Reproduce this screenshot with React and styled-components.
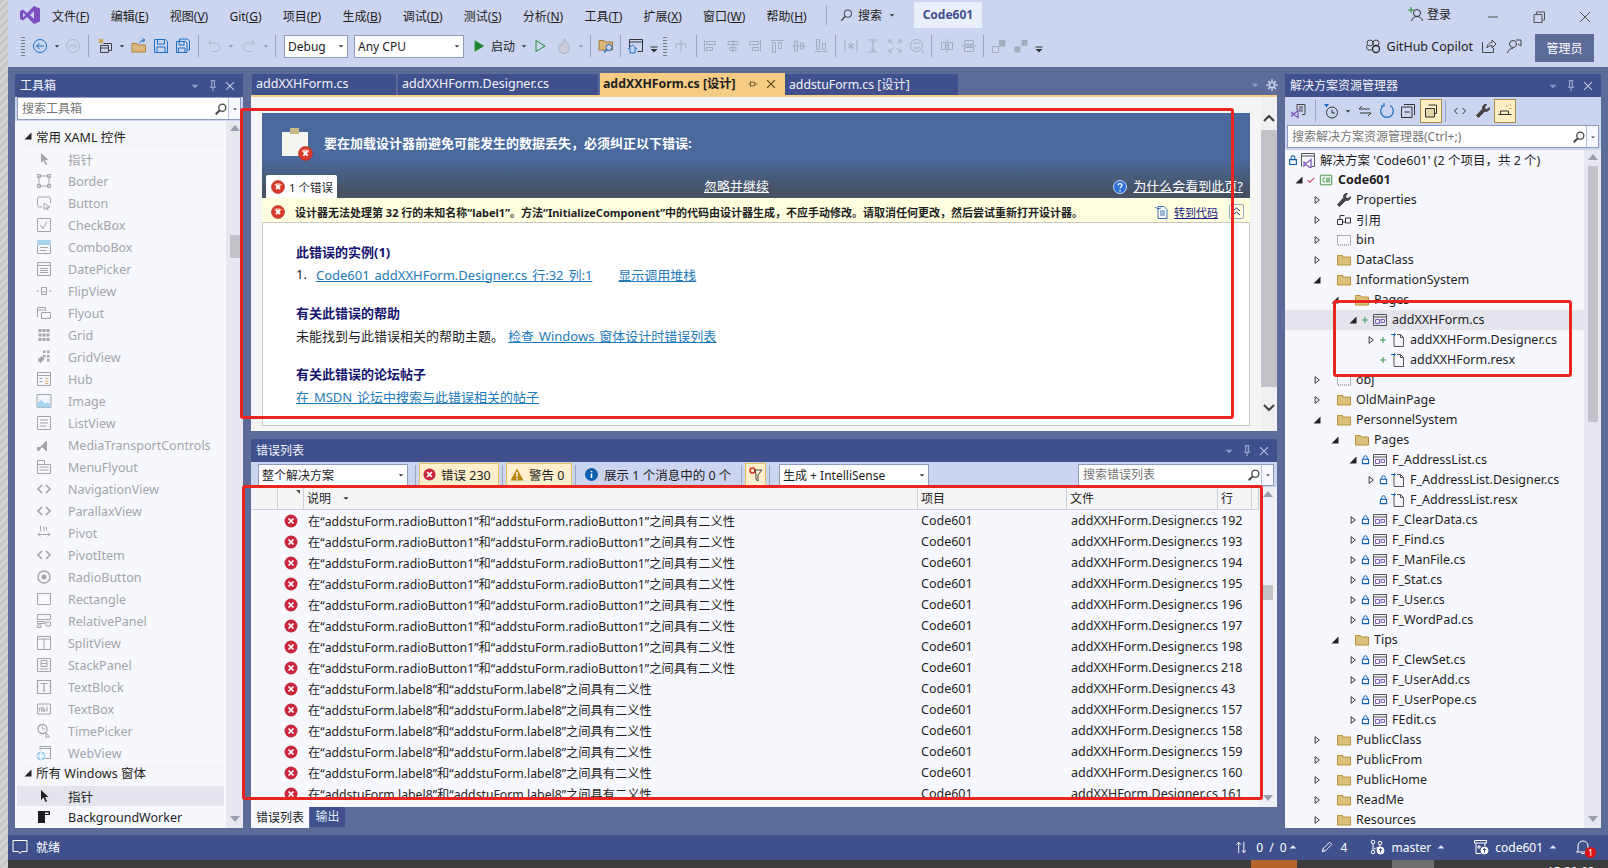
import React from "react";
import styled, { createGlobalStyle } from "styled-components";

const FONT = '"Noto Sans", "Noto Sans CJK SC", sans-serif';

const Global = createGlobalStyle`
  html, body { margin: 0; padding: 0; background: #ccd5f0; overflow: hidden; }
  body { font-family: ${FONT}; font-size: 12px; color: #1e1e1e; }
`;

const Glyph = styled.svg`
  display: block;
  flex: none;
  fill: none;
  stroke-width: 1;
`;

const BLUE = "#1b6ec2";
const GOLD = "#b8923f";
const PURPLE = "#7d5bb8";
const DIM = "#a3abbc";

const paths = {
  back: <g stroke={BLUE}><circle cx="8" cy="8" r="6.5" /><path d="M12 8H4.5M7.5 5 4.500 8l3 3" /></g>,
  fwd: <g stroke="#aeb6c9"><circle cx="8" cy="8" r="6.5" /><path d="M4 8h7.5M8.5 5l3 3-3 3" /></g>,
  caret: <path d="M5 7h6l-3 3z" fill="#333" stroke="none" />,
  caretGrey: <path d="M5 7h6l-3 3z" fill="#8d95a8" stroke="none" />,
  caretPale: <path d="M4 6.5h8l-4 4z" fill="#8b9ac6" stroke="none" />,
  caretWhite: <path d="M3.5 10 8 5.5l4.5 4.500z" fill="#e8ecf8" stroke="none" />,
  new: (
    <>
      <path d="M4 .5v5M1.5 3h5M2 1l4 4M6 1 2 5" stroke="#c89a2a" />
      <path d="M6.5 5.5h8v7h-3" stroke="#444" />
      <path d="M3.5 7.5h8v7h-8zM3.5 10h8" stroke="#444" />
    </>
  ),
  open: (
    <>
      <path d="M1 14V5.5h5l1 1.5h7.5v7z" fill="#dcb67a" stroke="#b0823a" />
      <path d="M8.5 5c1-2 3-3 5-3M11.5.5l2.5 1.5-2.5 2" stroke={BLUE} />
    </>
  ),
  save: <path d="M1.5 1.5h11l2 2v11h-13zM4.500 1.500V6h7V1.500M4 14.500V9h8v5.500" stroke={BLUE} />,
  saveall: (
    <>
      <path d="M4.5 3V1h8l2 2v9h-2" stroke={BLUE} />
      <path d="M1.5 3.5h9L12 5v9.500H1.500zM4 3.500V7h5V3.500M3.500 14.500V10h6.500v4.500" stroke={BLUE} />
    </>
  ),
  undo: <path d="M5 2 2.500 5l3 2.500M3 5h6.500a4.200 4.200 0 0 1 0 8.500H6" stroke="#aeb6c9" />,
  redo: <path d="M11 2l2.500 3-3 2.500M13 5H6.500a4.200 4.200 0 0 0 0 8.500H10" stroke="#aeb6c9" />,
  play: <path d="M3 1.500v13L14 8z" fill="#1e8a2e" stroke="none" />,
  play2: <path d="M4 2.500v11L13 8z" stroke="#1e8a2e" />,
  flame: <path d="M9 1c0 3 4.500 5 4.500 9a5.500 5.500 0 0 1-11 0c0-2 1-3.500 2-4.500 0 1.500.5 2.500 1.500 2.500C6.500 6 7 3 9 1z" fill="#c9ccd6" stroke="#aeb2c0" />,
  folderFind: (
    <>
      <path d="M1 12V2.500h5L7 4h7.500v8z" fill="#dcb67a" stroke="#9a7a38" />
      <circle cx="11" cy="9.500" r="3" fill="#ccd5f0" stroke={BLUE} />
      <path d="M9 11.500l-3 3" stroke={BLUE} strokeWidth="1.500" />
    </>
  ),
  winHome: (
    <>
      <path d="M1.500 9V1.500h13v12h-5M1.500 4h13" stroke="#333" />
      <path d="M0 11 4.500 7 9 11M2 10v5h5v-5" stroke={BLUE} />
    </>
  ),
  more: (
    <>
      <path d="M4.500 9h7" stroke="#333" />
      <path d="M4.500 11h7L8 14.500z" fill="#333" stroke="none" />
    </>
  ),
  tabOrder: <path d="M8 2v12M3 6h10M3 6v4M13 6v4" stroke={DIM} />,
  alignL: <path d="M2.500 2v12M4.500 3.500h9v3h-9zM4.500 9.500h6v3h-6z" stroke={DIM} />,
  alignC: <path d="M8 1.500v13M3 3.500h10v3H3zM5 9.500h6v3H5z" stroke={DIM} />,
  alignR: <path d="M13.500 2v12M2.500 3.500h9v3h-9zM5.500 9.500h6v3h-6z" stroke={DIM} />,
  alignT: <path d="M1.500 2.500h13M3.500 4.500v10h3v-10zM9.500 4.500v6h3v-6z" stroke={DIM} />,
  alignM: <path d="M1.500 8h13M3.500 3v10h3V3zM9.500 5v6h3V5z" stroke={DIM} />,
  alignB: <path d="M1.500 13.500h13M3.500 1.500v10h3v-10zM9.500 5.500v6h3v-6z" stroke={DIM} />,
  spaceEq: <path d="M2 2v12M14 2v12M8 4.500v7M5 6l6 4M11 6l-6 4" stroke={DIM} />,
  vSize: <path d="M3 2h10M3 14h10M8 3v10M6 5l2-2 2 2M6 11l2 2 2-2" stroke={DIM} />,
  fit: <path d="M2 5V2h3M11 2h3v3M14 11v3h-3M5 14H2v-3M3 3l3 3M13 3l-3 3M13 13l-3-3M3 13l3-3" stroke={DIM} />,
  zoomFit: <g stroke={DIM}><circle cx="7.500" cy="7.500" r="6" /><path d="M5 6V5h5v1M5 9v1h5V9M12 12l3 3" /></g>,
  distH: <path d="M8 1v14M2.500 4.500h4v7h-4zM9.500 4.500h4v7h-4z" stroke={DIM} />,
  distV: <path d="M1 8h14M3.500 2.500h9v4h-9zM3.500 9.500h9v4h-9z" stroke={DIM} />,
  front: (
    <>
      <path d="M1.500 8.500h6v6h-6z" stroke={DIM} />
      <path d="M8 2h6.500v6.500H8z" fill={DIM} stroke="none" />
    </>
  ),
  backward: (
    <>
      <path d="M1.500 8.500h6v6h-6z" fill={DIM} stroke="none" />
      <path d="M8.500 2h6v6h-6z" fill={DIM} stroke="none" />
    </>
  ),
  search: <><circle cx="9.500" cy="6.500" r="4" stroke="#444" strokeWidth="1.500" /><path d="M6.500 9.500 2 14" stroke="#444" strokeWidth="2.200" /></>,
  searchThin: <><circle cx="9.500" cy="6" r="4" stroke="#333" /><path d="M6.500 9 2.500 13.500" stroke="#333" strokeWidth="1.400" /></>,
  signin: (
    <>
      <circle cx="9" cy="7" r="3.500" stroke="#333" />
      <path d="M3.500 15c.5-3 3-4.500 5.500-4.500s5 1.500 5.500 4.500" stroke="#333" />
      <path d="M3 1v6M0 4h6" stroke="#1e8a2e" />
    </>
  ),
  min: <path d="M3 8h10" stroke="#555" />,
  restore: <path d="M3 5.500h8v8H3zM5.500 5.500V3h8v8H11" stroke="#555" />,
  close: <path d="M3 3l10 10M13 3 3 13" stroke="#555" />,
  copilot: (
    <>
      <circle cx="5" cy="5" r="3" stroke="#444" />
      <circle cx="11" cy="5" r="3" stroke="#444" />
      <path d="M2 7c-1 2 0 5 2 5h3" stroke="#444" />
      <circle cx="11" cy="11" r="3.500" fill="#ccd5f0" stroke="#222" strokeWidth="1.300" />
    </>
  ),
  share: <path d="M1.500 4v10.500h11V10M6 10c0-4 3-5.500 5-5.500V2l4 4-4 4V7.500c-2 0-4 .5-5 2.500z" stroke="#444" />,
  feedback: (
    <>
      <circle cx="7" cy="6" r="3.500" stroke="#444" />
      <path d="M1.500 15c.5-3 2.500-4.500 5.500-4.500M10 2h5v6l-3-2" stroke="#444" />
    </>
  ),
  pin: <path d="M5.500 2h5M6.500 2v6L5 9.500h6L9.500 8V2M8 9.500V14" stroke="#b8c3e2" />,
  pinDark: <path d="M3 8h2M5 4.500v7M5 6h5v4H5M10 8h3" stroke="#6b5320" />,
  x: <path d="M3.500 3.500l9 9M12.500 3.500l-9 9" stroke="#b8c3e2" strokeWidth="1.300" />,
  xDark: <path d="M3.500 3.500l9 9M12.500 3.500l-9 9" stroke="#5a4516" strokeWidth="1.300" />,
  gear: <g stroke="#c9d2ec" strokeWidth="1.800"><circle cx="8" cy="8" r="3" /><path d="M8 1.500V4M8 12v2.500M1.500 8H4M12 8h2.500M3.500 3.500l1.800 1.800M10.700 10.700l1.800 1.800M12.500 3.500l-1.800 1.800M5.300 10.700l-1.800 1.800" /></g>,
  // toolbox
  pointer: <path d="M5 2v10l2.500-2.500L9.500 14l1.500-.7-2-4.300h3.500z" fill="currentColor" stroke="none" />,
  border: <path d="M3 3h10v10H3zM1.500 1.500h3v3h-3zM11.500 1.500h3v3h-3zM1.500 11.500h3v3h-3zM11.500 11.500h3v3h-3z" stroke="currentColor" />,
  button: <path d="M6 12H3c-1 0-1.500-.5-1.500-1.500v-7C1.500 2.500 2 2 3 2h10c1 0 1.500.5 1.500 1.500V8M8 8v6.500l1.800-1.800 1.500 2.300 1-.6-1.400-2.200H14z" stroke="currentColor" />,
  check: <path d="M1.500 1.500h13v13h-13zM4.500 8L7 11.500l4-7" stroke="currentColor" />,
  combo: (
    <>
      <path d="M1.500 1.500h13v13h-13z" stroke="currentColor" />
      <path d="M1.500 1.500h13v4h-13z" fill="#a8d4ee" stroke="#a8d4ee" />
      <path d="M4 8.500h8M4 11.500h6" stroke="currentColor" />
    </>
  ),
  date: <path d="M1.500 1.500h13v13h-13zM1.500 4.500h13M4 7.500h8M4 9.500h8M4 11.500h8" stroke="currentColor" />,
  flip: <path d="M5.500 4.500h5v7h-5zM3 8H.5M13 8h2.500M6.500 10L8 8l2 2" stroke="currentColor" />,
  flyout: <path d="M1.500 12V2.500h8V6M1.500 5h8M5.500 7.500h9v6h-9z" stroke="currentColor" />,
  grid: <path d="M2.500 3.500h11M2.500 8h11M2.500 12.500h11" stroke="currentColor" strokeWidth="3" strokeDasharray="3 1" />,
  gridView: <path d="M7 1.500h2.500V4H7zM11 1.500h2.500V4H11zM7 6h2.500v2.500H7zM11 6h2.500v2.500H11zM11 10h2.500v2.500H11zM1.500 11l4-4 3 3-4 4z" fill="currentColor" stroke="none" />,
  hub: (
    <>
      <path d="M1.500 1.500h13v13h-13zM1.500 4.500h13M3.500 7.500h3M3.500 10.500h3" stroke="currentColor" />
      <path d="M9 7.500h3.500M9 10h3.500M9 12.500h3.500" stroke="#dcb67a" />
    </>
  ),
  image: (
    <>
      <path d="M1 1.500h14v13H1z" fill="#f0f6fc" stroke="currentColor" />
      <path d="M1 14.500V10l4-3 4 3.500L11.500 9l3.500 2.500v3z" fill="#a8d4ee" stroke="none" />
    </>
  ),
  listView: <path d="M1.500 1.500h13v13h-13zM4 5h8M4 8h8M4 11h6" stroke="currentColor" />,
  media: <path d="M1 10h3l6-6h1v10h-1l-4-4-3 4H1z" fill="currentColor" stroke="none" />,
  menu: <path d="M1.500 1.500h7v4h6v9h-13zM1.500 5.500h7M3.500 8h9M3.500 11h9" stroke="currentColor" />,
  code: <path d="M6 4 2 8l4 4M10 4l4 4-4 4" stroke="currentColor" strokeWidth="1.600" />,
  pivot: <path d="M2 9.500h12M2 9.500l2-2M2 9.500l2 2M14 9.500l-2-2M14 9.500l-2 2M4.500 1v5M8 1v5M10.500 2v3.500" stroke="currentColor" />,
  radio: <><circle cx="8" cy="8" r="6" stroke="currentColor" strokeWidth="1.500" /><circle cx="8" cy="8" r="2.500" fill="currentColor" stroke="none" /></>,
  rect: <path d="M1.500 2.500h13v11h-13z" stroke="currentColor" />,
  relative: <path d="M1.500 1.500h13v5h-13zM1.500 8.500h7v2h-7zM1.500 12H5v2.500H1.500zM10 9h4.500v4H10z" stroke="currentColor" />,
  split: <path d="M1.500 1.500h13v13h-13zM1.500 4h13M8 4v10.500" stroke="currentColor" />,
  stack: <path d="M1.500 1.500h13v13h-13zM5 3.500h6v3H5zM5 6.500h6v3H5zM3.500 12h9" stroke="currentColor" />,
  textBlock: <path d="M1.500 1.500h13v13h-13zM4.500 4.500h7M8 4.500V12M6.500 12h3" stroke="currentColor" strokeWidth="1.200" />,
  textBox: <path d="M1.500 3h13v10h-13zM3.500 10.500V7l1-1 1 1v3.500M7 5.500v5h1.500l.5-1-.5-1.500H7M11 5.500v5" stroke="currentColor" />,
  time: <><circle cx="6.500" cy="6" r="4.500" stroke="currentColor" strokeWidth="1.300" /><path d="M6.500 3.500V6H9M10 9.500V15l1.300-1.200 2.200.2z" stroke="currentColor" /></>,
  web: (
    <>
      <path d="M4 1.500h10.500v12H9M4 1.500V5M4 3.500h10.500" stroke="currentColor" />
      <circle cx="5" cy="11" r="4" fill="#bfe0f4" stroke="#8dc6e8" />
      <path d="M1 11h8M5 7v8" stroke="#fff" />
    </>
  ),
  worker: <path d="M2 2h12v4H9v8H2zM9 3.500h3.500V5H9z" fill="currentColor" fillRule="evenodd" stroke="none" />,
  // explorer
  vsDoc: (
    <>
      <path d="M6 7V1.500h8v10h-3M8 4h4M8 6h4M8 8h4" stroke="#444" />
      <path d="M1 9.500L3 11l4-3.500v7l-4-3-2 1.500z" stroke={PURPLE} strokeWidth="1.300" />
    </>
  ),
  history: (
    <>
      <circle cx="9" cy="9.500" r="5.500" stroke="#333" />
      <path d="M9 6.500V10h3" stroke="#333" />
      <path d="M1 1h5L3.500 4.500z" fill={BLUE} stroke="none" />
    </>
  ),
  syncArrows: <path d="M2 6h11M5 3 2 6M14 10H3M11 13l3-3" stroke="#333" />,
  refresh: <path d="M5 2.500A6.300 6.300 0 1 0 11 2.500M5 0v3H2" stroke={BLUE} strokeWidth="1.200" />,
  collapse: <path d="M1.500 4H12v10.500H1.500zM4 1.500h10.500V12M4.500 9h5" stroke="#333" />,
  pages: (
    <>
      <path d="M5.500 2h8v8.500h-2" stroke="#333" />
      <path d="M2.500 5.500h9V14h-9z" stroke="#333" fill="#e6d6ac" />
    </>
  ),
  codeDark: <path d="M5.500 5 2.500 8l3 3M10.500 5l3 3-3 3" stroke="#333" />,
  wrench: <path d="M14.500 4.500L12 6.500 10 6l-.5-2 2-2.500c-2-.5-4 1-4 3 0 .5 0 1 .2 1.300L1.500 12.500l2 2 6.200-6.200c2.500.8 5.300-1.300 4.800-3.800z" fill="#444" stroke="#444" />,
  plugin: (
    <>
      <path d="M1.500 11.500h13M3.500 11.500V8h8v3.500" stroke="#333" />
      <path d="M12.500 5.500h2M12.500 2.500l1.500-1M9.500 4l.5-1.500" stroke={GOLD} />
    </>
  ),
  folder: <path d="M1.500 13V3.500h5l1 1.500h7v8z" fill="#dcc07a" stroke={GOLD} />,
  dotted: <path d="M1.500 3.500h13V13h-13z" stroke="#666" strokeDasharray="1 1" />,
  form: (
    <>
      <path d="M1.500 2.500h13v11h-13zM1.500 5h13" stroke="#555" />
      <path d="M3.500 7.500h4v4h-4zM9 7.500h3.500v3H9z" stroke={PURPLE} />
    </>
  ),
  page: (
    <>
      <path d="M4 3.500v11h9.500v-9l-3-3H7" stroke="#555" />
      <path d="M10.500 2.500v3h3" stroke="#555" />
      <path d="M1 2.500h4.500M4 1l1.500 1.500L4 4" stroke={BLUE} />
    </>
  ),
  solution: (
    <>
      <path d="M1.500 14.500v-13h13v13h-5M1.500 4h13" stroke="#555" />
      <path d="M4 10l2 1.500 5-4v9l-5-4-2 1.500z" fill="#fff" stroke={PURPLE} strokeWidth="1.300" />
    </>
  ),
  csproj: (
    <>
      <path d="M1.500 2.500h13v11h-13z" fill="#eaf5ea" stroke="#3f8f45" />
      <path d="M7 5.500H5.500l-1 1V9l1 1H7" stroke="#3f8f45" />
      <path d="M9 5v6M11.500 5v6M8 7h5M8 9.500h5" stroke="#3f8f45" strokeWidth=".8" />
    </>
  ),
  refs: <path d="M1.500 7.500h5v5h-5zM9.500 6h5v5h-5zM4 7.500v-4h4.500M6.500 10h3" stroke="#333" />,
  lock: <><path d="M3.500 7.500h9V14h-9z" stroke="#0f5fae" strokeWidth="1.500" /><path d="M5.500 7.500V5a2.500 2.500 0 0 1 5 0v2.500" stroke="#0f5fae" strokeWidth="1.400" /></>,
  plus: <path d="M8 4v8M4 8h8" stroke="#3f9a56" strokeWidth="1.400" />,
  tick: <path d="M3.500 8l3 3 6-6" stroke="#c8283c" strokeWidth="1.400" />,
  triOpen: <path d="M4 12h8V4z" fill="#222" stroke="none" />,
  triClosed: <path d="M5.500 3.500L11 8l-5.500 4.500z" stroke="#222" strokeWidth="1.200" />,
  // status
  bubble: <path d="M1 1.500h14v11H9.500L8 14.500l-1.500-2H1z" stroke="#fff" />,
  sort: <path d="M5 14V2.500M2.500 5L5 2.500 7.500 5M10.500 2v11.500M8.500 11l2 2.500 2-2.500" stroke="#fff" />,
  pencil: <path d="M2.500 13.500l1-3.500L11 2.500 13.500 5 6 12.500zM3.500 10L6 12.500" stroke="#fff" />,
  branch: (
    <g stroke="#fff">
      <circle cx="4" cy="3" r="1.800" />
      <circle cx="4" cy="13" r="1.800" />
      <circle cx="11" cy="4" r="1.800" />
      <path d="M4 5v6M11 6c0 3-4 2.500-6 4" />
      <circle cx="11.500" cy="11.500" r="3.500" fill="#fff" />
      <path d="M11.500 13.500v-4M10 11l1.500-1.500L13 11" stroke="#40508d" />
    </g>
  ),
  repo: (
    <g stroke="#fff">
      <path d="M1.500 1.500h12V4h-12zM3 4v10.500h5M12 4v3" />
      <path d="M5 7h2v2H5z" />
      <circle cx="11.500" cy="11.500" r="3.500" fill="#fff" />
      <path d="M11.500 13.500v-4M10 11l1.500-1.500L13 11" stroke="#40508d" />
    </g>
  ),
  bell: <path d="M3 11.500V7a5 5 0 0 1 10 0v4.500l1.500 1.500h-13zM6.500 14.500h3" stroke="#fff" />,
};

const Icon = ({ n, s = 16 }) => (
  <Glyph width={s} height={s} viewBox="0 0 16 16">
    {paths[n]}
  </Glyph>
);

const ErrorDot = ({ s = 14 }) => (
  <Glyph width={s} height={s} viewBox="0 0 14 14">
    <circle cx="7" cy="7" r="6.500" fill="#c8283c" />
    <path d="M4.500 4.500l5 5M9.500 4.500l-5 5" stroke="#fff" strokeWidth="1.700" />
  </Glyph>
);

const GlossDot = ({ s = 15 }) => (
  <Glyph width={s} height={s} viewBox="0 0 14 14">
    <circle cx="7" cy="7" r="6.500" fill="#d8392c" stroke="#a92a20" strokeWidth=".6" />
    <path d="M3 5c1-2.500 7-2.500 8 0-2 1-6 1-8 0z" fill="#f6a99a" />
    <path d="M5 5l4 4M9 5L5 9" stroke="#fff" strokeWidth="1.800" />
  </Glyph>
);

const Root = styled.div`
  position: relative;
  display: flex;
  width: 1608px;
  height: 868px;
  overflow: hidden;
`;

const Strip = styled.div`
  flex: none;
  width: 8px;
  background: repeating-linear-gradient(135deg, #c6c6c6 0 3px, #d4d4d4 3px 6px);
`;

const Win = styled.div`
  flex: 1;
  min-width: 0;
  display: flex;
  flex-direction: column;
`;

const MenuBar = styled.div`
  flex: none;
  height: 33px;
  display: flex;
  align-items: center;
  background: #ccd5f0;
  padding-left: 12px;
`;

const Logo = styled.svg`
  flex: none;
  margin-right: 12px;
  margin-top: -3px;
`;

const MenuItem = styled.span`
  flex: none;
  margin-right: 21.2px;
  font-size: 12px;
  line-height: 18px;
  color: #1e1e1e;
  white-space: nowrap;
`;

const Key = styled.span`
  text-decoration: underline;
`;

const MenuSep = styled.i`
  flex: none;
  width: 1px;
  height: 20px;
  background: #9aa5c4;
  margin: -4px 12px 0 -2px;
`;

const SearchHint = styled.div`
  display: flex;
  align-items: center;
  gap: 4px;
  margin-top: -3px;
  margin-right: 16px;
  font-size: 12px;
`;

const ProjectName = styled.div`
  flex: none;
  width: 68px;
  height: 26px;
  margin-top: -4px;
  display: flex;
  align-items: center;
  justify-content: center;
  background: #e9effb;
  color: #40508d;
  font-weight: 700;
  font-size: 12px;
`;

const SignIn = styled.div`
  margin-left: auto;
  margin-top: -5px;
  display: flex;
  align-items: center;
  gap: 3px;
  font-size: 12px;
`;

const WinButton = styled.span`
  flex: none;
  width: 46px;
  display: flex;
  justify-content: center;
`;

const WinButtons = styled.div`
  display: flex;
  margin-left: 19px;
`;

const ToolBar = styled.div`
  flex: none;
  height: 34px;
  box-sizing: border-box;
  display: flex;
  align-items: center;
  background: #ccd5f0;
  padding: 0 0 8px 10px;
`;

const ToolSlot = styled.span`
  flex: none;
  width: ${(p) => p.$w}px;
  margin-left: ${(p) => p.$ml ?? 0}px;
  display: flex;
  justify-content: center;
  align-items: center;
  color: #a8a8ae;
`;

const Gripper = styled.i`
  display: block;
  width: 4px;
  height: 20px;
  background: radial-gradient(circle, #777 0.7px, transparent 0.9px) 0 0 / 2px 3px;
`;

const BarSep = styled.i`
  display: block;
  width: 1px;
  height: 22px;
  background: #9aa5c4;
`;

const Combo = styled.div`
  flex: none;
  box-sizing: border-box;
  width: ${(p) => p.$w}px;
  height: ${(p) => p.$h ?? 23}px;
  margin-left: ${(p) => p.$ml ?? 0}px;
  display: flex;
  align-items: center;
  justify-content: space-between;
  padding-left: 3px;
  background: #fff;
  border: 1px solid #8e9bbc;
  font-size: 12px;
  white-space: nowrap;
`;

const RunText = styled.span`
  flex: none;
  width: 24px;
  margin-left: 6px;
  margin-right: 4px;
  font-size: 12px;
  white-space: nowrap;
`;

const RightTools = styled.div`
  margin-left: auto;
  display: flex;
  align-items: center;
`;

const CopilotLabel = styled.span`
  font-size: 12.5px;
  margin-left: 6px;
  margin-right: 3px;
  white-space: nowrap;
`;

const AdminButton = styled.div`
  width: 59px;
  height: 28px;
  margin: 4px 14px 0 9px;
  display: flex;
  align-items: center;
  justify-content: center;
  background: #5d6b99;
  color: #fff;
  font-size: 12px;
`;

const Workspace = styled.div`
  flex: 1;
  min-height: 0;
  display: flex;
  gap: 8px;
  padding: 7px;
  background: #5d6b99;
`;

const Column = styled.div`
  flex: none;
  width: ${(p) => p.$w}px;
  display: flex;
  flex-direction: column;
  min-height: 0;
`;

const PanelHead = styled.div`
  flex: none;
  height: 23px;
  display: flex;
  align-items: center;
  padding: 0 4px 0 5px;
  background: #40508d;
  color: #f0f3fb;
  font-size: 12px;
`;

const PanelTitle = styled.span`
  flex: 1;
  margin-top: -2px;
`;

const HeadSlot = styled.span`
  flex: none;
  width: 17.5px;
  display: flex;
  justify-content: center;
`;

const SearchRow = styled.div`
  flex: none;
  height: ${(p) => p.$h}px;
  padding: 0 2px;
  box-sizing: border-box;
  background: #ccd5f0;
`;

const SearchBox = styled.div`
  box-sizing: border-box;
  width: ${(p) => (p.$w ? `${p.$w}px` : "auto")};
  height: ${(p) => p.$h ?? 23}px;
  margin-left: ${(p) => p.$ml ?? 0}px;
  display: flex;
  align-items: center;
  background: #fff;
  border: 1px solid #8e9bbc;
  color: #767676;
  font-size: 12px;
`;

const SearchText = styled.span`
  flex: 1;
  padding: 0 0 2px 4px;
  white-space: nowrap;
`;

const SearchDrop = styled.span`
  flex: none;
  width: 11px;
  align-self: stretch;
  display: flex;
  align-items: center;
  justify-content: center;
  border-left: 1px solid #b8c2dc;
  background: #f6f8fe;
`;

const ListArea = styled.div`
  flex: 1;
  min-height: 0;
  display: flex;
  background: #f6f8fe;
`;

const ListBody = styled.div`
  flex: 1;
  min-width: 0;
  overflow: hidden;
`;

const Track = styled.div`
  flex: none;
  width: ${(p) => p.$w ?? 17}px;
  display: flex;
  flex-direction: column;
  align-items: center;
  background: ${(p) => p.$bg ?? "#e6e7ef"};
  padding: ${(p) => p.$pad ?? "4px 0"};
  box-sizing: border-box;
`;

const Thumb = styled.div`
  flex: none;
  width: ${(p) => p.$w ?? 10}px;
  height: ${(p) => p.$h}px;
  margin-top: ${(p) => p.$top}px;
  background: #c2c3c9;
`;

const ArrowUp = styled.i`
  flex: none;
  width: 0;
  height: 0;
  border: 5px solid transparent;
  border-top: 0;
  border-bottom: 6px solid #9a9fae;
`;

const ArrowDown = styled(ArrowUp)`
  margin-top: auto;
  margin-bottom: 2px;
  transform: rotate(180deg);
`;

const ToolGroup = styled.div`
  height: 22px;
  box-sizing: border-box;
  margin: ${(p) => p.$mt ?? 0}px 2px 0;
  display: flex;
  align-items: center;
  padding: 0 0 ${(p) => p.$pb ?? 0}px 6px;
  gap: 4px;
  background: #f5f6f9;
  color: #1e1e1e;
  font-size: 12.5px;
`;

const Tri = styled.span`
  width: 9px;
  display: flex;
  justify-content: center;
`;

const ToolItem = styled.div`
  height: ${(p) => p.$h ?? 22}px;
  margin: 0 2px;
  display: flex;
  align-items: center;
  padding-left: 19px;
  gap: 16px;
  background: ${(p) => (p.$sel ? "#e3e4ec" : "transparent")};
  color: ${(p) => (p.$on ? "#1e1e1e" : "#a4a5a8")};
  font-size: 12.5px;
  white-space: nowrap;
`;

const DocTabs = styled.div`
  flex: none;
  height: 21px;
  display: flex;
  align-items: flex-start;
  gap: 2px;
  padding-left: 1px;
  border-bottom: 2px solid #f5cc84;
`;

const DocTab = styled.div`
  flex: none;
  width: ${(p) => p.$w}px;
  height: ${(p) => (p.$on ? 22 : 21)}px;
  display: flex;
  align-items: center;
  box-sizing: border-box;
  padding: 0 0 2px ${(p) => (p.$on ? 3 : 4)}px;
  margin: ${(p) => (p.$on ? "-1px -2px 0 0" : 0)};
  background: ${(p) => (p.$on ? "#f5cc84" : "#40508d")};
  color: ${(p) => (p.$on ? "#1e1e1e" : "#f0f3fb")};
  font-weight: ${(p) => (p.$on ? 700 : 400)};
  font-size: ${(p) => p.$size ?? 12.5}px;
  white-space: nowrap;
`;

const TabTail = styled.span`
  margin-left: auto;
  display: flex;
  align-items: center;
  gap: 4px;
  padding: 2px 7px 0 0;
`;

const TabsEnd = styled.div`
  margin: 0 -2px 0 auto;
  display: flex;
  align-items: center;
  height: 21px;
  gap: 3px;
`;

const DocArea = styled.div`
  flex: none;
  height: 334px;
  display: flex;
  background: #f5f5f5;
`;

const Canvas = styled.div`
  flex: 1;
  min-width: 0;
  padding: 16px 11px 5px;
  display: flex;
`;

const Designer = styled.div`
  flex: 1;
  display: flex;
  flex-direction: column;
  border: 1px solid #c9c7bd;
  border-top: 0;
  background: #fff;
`;

const DesignHead = styled.div`
  flex: none;
  height: 85px;
  display: flex;
  flex-direction: column;
  margin: 0 -1px;
  background: linear-gradient(#4a6a9e 0, #4a6a9e 52%, #465264 92%, #465264 100%);
  color: #fff;
`;

const HeadTop = styled.div`
  height: 62px;
  box-sizing: border-box;
  padding: 0 0 3px 19px;
  display: flex;
  align-items: center;
  gap: 11px;
`;

const HeadTitle = styled.div`
  font-size: 13px;
  font-weight: 700;
  white-space: nowrap;
`;

const ClipIcon = styled.div`
  position: relative;
  width: 32px;
  height: 30px;
  flex: none;
`;

const ClipBadge = styled.span`
  position: absolute;
  right: 0;
  bottom: -3px;
`;

const HeadTabs = styled.div`
  height: 23px;
  display: flex;
  align-items: flex-end;
  padding-left: 4px;
`;

const ErrTab = styled.div`
  width: 71px;
  height: 23px;
  display: flex;
  align-items: center;
  gap: 4px;
  padding-left: 5px;
  box-sizing: border-box;
  background: #fff;
  color: #1e1e1e;
  font-size: 11.5px;
  border-radius: 2px 2px 0 0;
`;

const HeadLink = styled.a`
  margin-left: ${(p) => p.$ml ?? 0}px;
  height: 22px;
  line-height: 20px;
  color: #fff;
  font-size: 13px;
  text-decoration: underline;
  white-space: nowrap;
`;

const HeadRight = styled.div`
  margin-left: auto;
  display: flex;
  align-items: center;
  gap: 6px;
  padding-right: 7px;
`;

const NoticeBar = styled.div`
  flex: none;
  height: 25px;
  display: flex;
  align-items: center;
  box-sizing: border-box;
  margin: 0 -1px;
  padding: 3px 0 0 9px;
  gap: 10px;
  background: #ffffdf;
  border-bottom: 1px solid #c9c7bd;
  font-size: 11px;
  font-weight: 700;
  white-space: nowrap;
`;

const NoticeLink = styled.div`
  margin-left: auto;
  display: flex;
  align-items: center;
  gap: 5px;
  color: #1a1a80;
  font-weight: 400;
  text-decoration: underline;
`;

const CollapseBox = styled.span`
  width: 13px;
  height: 13px;
  margin: 0 6px 0 6px;
  border: 1px solid #9aa5c4;
  border-radius: 2px;
  display: flex;
  align-items: center;
  justify-content: center;
`;

const DesignBody = styled.div`
  padding: 19px 0 0 33px;
`;

const Section = styled.div`
  margin-bottom: 17px;
`;

const Heading = styled.div`
  height: 20px;
  line-height: 20px;
  color: #14146e;
  font-size: 13px;
  font-weight: 700;
`;

const BodyLine = styled.div`
  height: 24px;
  display: flex;
  align-items: center;
  font-size: 13px;
  white-space: nowrap;
`;

const DocLink = styled.a`
  margin-left: ${(p) => p.$ml ?? 0}px;
  color: #1e7ab8;
  text-decoration: underline;
  word-spacing: 1.5px;
`;

const Chevron = styled.svg`
  flex: none;
  display: block;
  margin: ${(p) => p.$m};
`;

const ErrorPanel = styled.div`
  flex: 1;
  min-height: 0;
  margin-top: 8px;
  display: flex;
  flex-direction: column;
`;

const ErrTools = styled.div`
  flex: none;
  height: 25px;
  display: flex;
  align-items: center;
  padding-left: 7px;
  background: #ccd5f0;
  font-size: 12px;
  box-sizing: border-box;
`;

const VSep = styled.i`
  flex: none;
  width: 1px;
  height: 20px;
  margin: ${(p) => `0 ${p.$r ?? 3}px 0 ${p.$l ?? 3}px`};
  background: #9aa5c4;
`;

const ToggleBtn = styled.div`
  flex: none;
  box-sizing: border-box;
  width: ${(p) => p.$w}px;
  height: 23px;
  display: flex;
  align-items: center;
  padding-left: 3px;
  gap: 5px;
  background: #ffefcc;
  border: 1px solid #e5c365;
  font-size: 12.5px;
  white-space: nowrap;
`;

const InfoText = styled.div`
  flex: none;
  width: 155px;
  display: flex;
  align-items: center;
  gap: 6px;
  padding-left: 6px;
  box-sizing: border-box;
  font-size: 12.5px;
  white-space: nowrap;
`;

const GridWrap = styled.div`
  flex: 1;
  min-height: 0;
  display: flex;
  background: #f7f8fe;
`;

const GridMain = styled.div`
  flex: 1;
  min-width: 0;
  display: flex;
  flex-direction: column;
  padding-bottom: 7px;
`;

const COLS = "27px 26px 614px 149px 151px 34px 7px";

const HeaderRow = styled.div`
  flex: none;
  height: 23px;
  display: grid;
  grid-template-columns: ${COLS};
  background: #f5f5f5;
  border-bottom: 1px solid #ccd0dc;
  box-sizing: border-box;
`;

const HeaderCell = styled.div`
  position: relative;
  display: flex;
  align-items: center;
  gap: 8px;
  padding-left: 3px;
  border-right: 1px solid #ccd0dc;
  font-size: 12px;
  box-sizing: border-box;
`;

const HeaderMark = styled.i`
  position: absolute;
  right: 3px;
  top: 3px;
  width: 0;
  height: 0;
  border: 2px solid #555;
  border-left-color: transparent;
  border-bottom-color: transparent;
`;

const Rows = styled.div`
  flex: 1;
  min-height: 0;
  overflow: hidden;
`;

const ErrRow = styled.div`
  height: 21px;
  display: grid;
  grid-template-columns: ${COLS};
  align-items: center;
  font-size: 12.5px;
  white-space: nowrap;
`;

const DotCell = styled.span`
  grid-column: 2;
  display: flex;
  justify-content: center;
`;

const Cell = styled.span`
  padding-left: ${(p) => p.$pl ?? 3}px;
  font-size: ${(p) => p.$size ?? 12.5}px;
`;

const BottomTabs = styled.div`
  flex: none;
  height: 21px;
  display: flex;
  gap: 1px;
`;

const BottomTab = styled.div`
  width: ${(p) => p.$w}px;
  box-sizing: border-box;
  padding-bottom: 2px;
  display: flex;
  align-items: center;
  justify-content: center;
  background: ${(p) => (p.$on ? "#f7f8fe" : "#40508d")};
  color: ${(p) => (p.$on ? "#1e1e1e" : "#dfe5f5")};
  margin-bottom: ${(p) => (p.$on ? 0 : 1)}px;
  font-size: 12px;
`;

const ExplorerBar = styled.div`
  flex: none;
  height: 28px;
  display: flex;
  align-items: center;
  background: #ccd5f0;
`;

const Toggled = styled.span`
  flex: none;
  box-sizing: border-box;
  width: 22px;
  height: 24px;
  display: flex;
  align-items: center;
  justify-content: center;
  background: #fdeec5;
  border: 1px solid #a98f45;
`;

const TreeRow = styled.div`
  height: 20px;
  box-sizing: border-box;
  display: flex;
  align-items: center;
  padding: 0 0 1px ${(p) => (p.$level < 0 ? 1 : 9 + p.$level * 18)}px;
  background: ${(p) => (p.$sel ? "#e3e4ec" : "transparent")};
  font-size: 12.5px;
  font-weight: ${(p) => (p.$bold ? 700 : 400)};
  white-space: nowrap;
`;

const TreeSlot = styled.span`
  flex: none;
  width: ${(p) => p.$w}px;
  display: flex;
  justify-content: center;
  align-items: center;
`;

const TreeLabel = styled.span`
  margin-left: 4px;
`;

const StatusBar = styled.div`
  flex: none;
  height: 25px;
  box-sizing: border-box;
  display: flex;
  align-items: center;
  background: #40508d;
  color: #fff;
  font-size: 12px;
  padding: 0 0 1px 4px;
`;

const StatusHint = styled.span`
  margin-left: 8px;
  margin-top: -1px;
`;

const StatusRight = styled.div`
  margin-left: auto;
  display: flex;
  align-items: center;
`;

const StatusItem = styled.span`
  display: flex;
  align-items: center;
  gap: ${(p) => p.$gap ?? 6}px;
  margin-right: ${(p) => p.$mr ?? 0}px;
  word-spacing: ${(p) => p.$ws ?? 0}px;
  white-space: nowrap;
`;

const BellWrap = styled.span`
  position: relative;
  display: block;
  margin-right: 17px;
`;

const BellBadge = styled.span`
  position: absolute;
  right: -5px;
  bottom: -3px;
  width: 11px;
  height: 11px;
  border-radius: 50%;
  background: #e01010;
  color: #fff;
  font-size: 9px;
  line-height: 11px;
  text-align: center;
`;

const Taskbar = styled.div`
  flex: none;
  height: 8px;
  display: flex;
  overflow: hidden;
  background: #3b3b3b;
`;

const TaskBlock = styled.i`
  flex: none;
  width: ${(p) => p.$w}px;
  margin-left: ${(p) => p.$ml}px;
  background: ${(p) => p.$c};
`;

const Clock = styled.span`
  margin-left: 113px;
  padding-top: 5px;
  color: #fff;
  font-size: 12px;
  line-height: 14px;
`;

// annotation drawn over the screenshot
const RedBox = styled.div`
  position: absolute;
  left: ${(p) => p.$x}px;
  top: ${(p) => p.$y}px;
  width: ${(p) => p.$w}px;
  height: ${(p) => p.$h}px;
  box-sizing: border-box;
  border: 3px solid #e8261f;
  border-radius: 3px;
  pointer-events: none;
`;

const menus = [
  ["文件", "F"], ["编辑", "E"], ["视图", "V"], ["Git", "G"], ["项目", "P"], ["生成", "B"],
  ["调试", "D"], ["测试", "S"], ["分析", "N"], ["工具", "T"], ["扩展", "X"], ["窗口", "W"], ["帮助", "H"],
];

const toolsA = [
  ["grip", 10], ["back", 24], ["caret", 10], ["fwd", 22], ["sep", 9], ["new", 24], ["caret", 10],
  ["open", 24], ["save", 20], ["saveall", 24], ["sep", 6], ["undo", 25], ["caretGrey", 10],
  ["redo", 26], ["caretGrey", 8], ["sep", 11],
];

const toolsB = [
  ["play2", 22], ["flame", 26], ["caretGrey", 8], ["sep", 11], ["folderFind", 20], ["sep", 8],
  ["winHome", 24], ["more", 12], ["grip", 10], ["tabOrder", 22], ["sep", 8], ["alignL", 20],
  ["alignC", 26], ["alignR", 18], ["alignT", 26], ["alignM", 18], ["alignB", 26], ["sep", 2],
  ["spaceEq", 30], ["vSize", 14], ["fit", 30], ["zoomFit", 14], ["sep", 15], ["distH", 16],
  ["distV", 28], ["sep", 1], ["front", 30], ["backward", 14], ["more", 22],
];

const renderTools = (list) =>
  list.map(([n, w], i) => (
    <ToolSlot key={i} $w={w}>
      {n === "sep" ? <BarSep /> : n === "grip" ? <Gripper /> : <Icon n={n} s={n.startsWith("caret") ? 12 : 16} />}
    </ToolSlot>
  ));

const toolboxItems = [
  ["pointer", "指针"], ["border", "Border"], ["button", "Button"], ["check", "CheckBox"], ["combo", "ComboBox"],
  ["date", "DatePicker"], ["flip", "FlipView"], ["flyout", "Flyout"], ["grid", "Grid"], ["gridView", "GridView"],
  ["hub", "Hub"], ["image", "Image"], ["listView", "ListView"], ["media", "MediaTransportControls"],
  ["menu", "MenuFlyout"], ["code", "NavigationView"], ["code", "ParallaxView"], ["pivot", "Pivot"],
  ["code", "PivotItem"], ["radio", "RadioButton"], ["rect", "Rectangle"], ["relative", "RelativePanel"],
  ["split", "SplitView"], ["stack", "StackPanel"], ["textBlock", "TextBlock"], ["textBox", "TextBox"],
  ["time", "TimePicker"], ["web", "WebView"],
];

const radio = "在“addstuForm.radioButton1”和“addstuForm.radioButton1”之间具有二义性";
const label = "在“addstuForm.label8”和“addstuForm.label8”之间具有二义性";
const errors = [
  [radio, 192], [radio, 193], [radio, 194], [radio, 195], [radio, 196], [radio, 197], [radio, 198], [radio, 218],
  [label, 43], [label, 157], [label, 158], [label, 159], [label, 160], [label, 161],
];

// level, arrow (o open / c closed / null), status, icon, text
const tree = [
  [0, "o", "tick", "csproj", "Code601", true],
  [1, "c", null, "wrench", "Properties"],
  [1, "c", null, "refs", "引用"],
  [1, "c", null, "dotted", "bin"],
  [1, "c", null, "folder", "DataClass"],
  [1, "o", null, "folder", "InformationSystem"],
  [2, "o", null, "folder", "Pages"],
  [3, "o", "plus", "form", "addXXHForm.cs", false, true],
  [4, "c", "plus", "page", "addXXHForm.Designer.cs"],
  [4, null, "plus", "page", "addXXHForm.resx"],
  [1, "c", null, "dotted", "obj"],
  [1, "c", null, "folder", "OldMainPage"],
  [1, "o", null, "folder", "PersonnelSystem"],
  [2, "o", null, "folder", "Pages"],
  [3, "o", "lock", "form", "F_AddressList.cs"],
  [4, "c", "lock", "page", "F_AddressList.Designer.cs"],
  [4, null, "lock", "page", "F_AddressList.resx"],
  [3, "c", "lock", "form", "F_ClearData.cs"],
  [3, "c", "lock", "form", "F_Find.cs"],
  [3, "c", "lock", "form", "F_ManFile.cs"],
  [3, "c", "lock", "form", "F_Stat.cs"],
  [3, "c", "lock", "form", "F_User.cs"],
  [3, "c", "lock", "form", "F_WordPad.cs"],
  [2, "o", null, "folder", "Tips"],
  [3, "c", "lock", "form", "F_ClewSet.cs"],
  [3, "c", "lock", "form", "F_UserAdd.cs"],
  [3, "c", "lock", "form", "F_UserPope.cs"],
  [3, "c", "lock", "form", "FEdit.cs"],
  [1, "c", null, "folder", "PublicClass"],
  [1, "c", null, "folder", "PublicFrom"],
  [1, "c", null, "folder", "PublicHome"],
  [1, "c", null, "folder", "ReadMe"],
  [1, "c", null, "folder", "Resources"],
];

const HeadIcons = () => (
  <>
    <HeadSlot><Icon n="caretPale" s={14} /></HeadSlot>
    <HeadSlot><Icon n="pin" s={14} /></HeadSlot>
    <HeadSlot><Icon n="x" s={14} /></HeadSlot>
  </>
);

const Toolbox = () => (
  <Column $w={228}>
    <PanelHead>
      <PanelTitle>工具箱</PanelTitle>
      <HeadIcons />
    </PanelHead>
    <SearchRow $h={24}>
      <SearchBox>
        <SearchText>搜索工具箱</SearchText>
        <Icon n="search" s={14} />
        <SearchDrop><Icon n="caret" s={10} /></SearchDrop>
      </SearchBox>
    </SearchRow>
    <ListArea>
      <ListBody>
        <ToolGroup $mt={5} $pb={2}>
          <Tri><Icon n="triOpen" s={14} /></Tri>常用 XAML 控件
        </ToolGroup>
        {toolboxItems.map(([n, t]) => (
          <ToolItem key={t}><Icon n={n} />{t}</ToolItem>
        ))}
        <ToolGroup $pb={5}>
          <Tri><Icon n="triOpen" s={14} /></Tri>所有 Windows 窗体
        </ToolGroup>
        <ToolItem $on $sel $h={20}><Icon n="pointer" />指针</ToolItem>
        <ToolItem $on><Icon n="worker" />BackgroundWorker</ToolItem>
      </ListBody>
      <Track>
        <ArrowUp />
        <Thumb $h={23} $top={104} />
        <ArrowDown />
      </Track>
    </ListArea>
  </Column>
);

const DesignPane = () => (
  <DocArea>
    <Canvas>
      <Designer>
        <DesignHead>
          <HeadTop>
            <ClipIcon>
              <svg width="28" height="28" viewBox="0 0 28 28">
                <rect x="1" y="4" width="26" height="24" fill="#f6f4ee" />
                <rect x="9" y="0" width="9" height="6" fill="#c9b989" />
              </svg>
              <ClipBadge><GlossDot s={15} /></ClipBadge>
            </ClipIcon>
            <HeadTitle>要在加载设计器前避免可能发生的数据丢失，必须纠正以下错误:</HeadTitle>
          </HeadTop>
          <HeadTabs>
            <ErrTab><GlossDot s={14} />1 个错误</ErrTab>
            <HeadLink $ml={367}>忽略并继续</HeadLink>
            <HeadRight>
              <svg width="14" height="14" viewBox="0 0 14 14">
                <circle cx="7" cy="7" r="6.5" fill="#2c6fd6" stroke="#c8dcf8" />
                <path d="M5 5.500c0-2.500 4-2.500 4 0 0 1.500-2 1.500-2 3M7 10v1.500" stroke="#fff" fill="none" strokeWidth="1.300" />
              </svg>
              <HeadLink>为什么会看到此页?</HeadLink>
            </HeadRight>
          </HeadTabs>
        </DesignHead>
        <NoticeBar>
          <GlossDot s={14} />
          设计器无法处理第 32 行的未知名称“label1”。方法“InitializeComponent”中的代码由设计器生成，不应手动修改。请取消任何更改，然后尝试重新打开设计器。
          <NoticeLink>
            <svg width="14" height="14" viewBox="0 0 14 14" fill="none">
              <path d="M3 1.500h6l3 3v9H3z" fill="#fff" stroke="#3d6cb0" />
              <path d="M5 6h5M5 8h5M5 10h5" stroke="#3d6cb0" />
              <path d="M0 2l3 2 3-1" stroke="#3d6cb0" />
            </svg>
            转到代码
            <CollapseBox>
              <svg width="9" height="9" viewBox="0 0 9 9" fill="none">
                <path d="M1 4l3.500-3L8 4M1 8l3.500-3L8 8" stroke="#1a1a80" />
              </svg>
            </CollapseBox>
          </NoticeLink>
        </NoticeBar>
        <DesignBody>
          <Section>
            <Heading>此错误的实例(1)</Heading>
            <BodyLine>
              1.
              <DocLink $ml={9}>Code601 addXXHForm.Designer.cs 行:32 列:1</DocLink>
              <DocLink $ml={26}>显示调用堆栈</DocLink>
            </BodyLine>
          </Section>
          <Section>
            <Heading>有关此错误的帮助</Heading>
            <BodyLine>
              未能找到与此错误相关的帮助主题。
              <DocLink $ml={4}>检查 Windows 窗体设计时错误列表</DocLink>
            </BodyLine>
          </Section>
          <Section>
            <Heading>有关此错误的论坛帖子</Heading>
            <BodyLine>
              <DocLink>在 MSDN 论坛中搜索与此错误相关的帖子</DocLink>
            </BodyLine>
          </Section>
        </DesignBody>
      </Designer>
    </Canvas>
    <Track $w={16} $bg="#f0f0f0" $pad="0">
      <Chevron width="14" height="12" viewBox="0 0 14 12" $m="15px 0 6px">
        <path d="M2 9l5-5 5 5" fill="none" stroke="#444" strokeWidth="2.200" />
      </Chevron>
      <Thumb $w={16} $h={257} $top={0} />
      <Chevron width="14" height="12" viewBox="0 0 14 12" $m="15px 0 0">
        <path d="M2 3l5 5 5-5" fill="none" stroke="#444" strokeWidth="2.200" />
      </Chevron>
    </Track>
  </DocArea>
);

const ErrorList = () => (
  <ErrorPanel>
    <PanelHead>
      <PanelTitle>错误列表</PanelTitle>
      <HeadIcons />
    </PanelHead>
    <ErrTools>
      <Combo $w={150} $h={22}>整个解决方案<Icon n="caret" s={12} /></Combo>
      <VSep $l={7} $r={3} />
      <ToggleBtn $w={80}><ErrorDot s={13} />错误 230</ToggleBtn>
      <VSep />
      <ToggleBtn $w={66}>
        <svg width="14" height="13" viewBox="0 0 14 13">
          <path d="M7 .5l6.500 12H.5z" fill="#b8860b" />
          <path d="M7 4v5M7 10v1.500" stroke="#fff" strokeWidth="1.400" />
        </svg>
        警告 0
      </ToggleBtn>
      <VSep />
      <InfoText>
        <svg width="13" height="13" viewBox="0 0 13 13">
          <circle cx="6.5" cy="6.5" r="6.5" fill="#0f5fae" />
          <path d="M6.500 5.500V10M6.500 3v1.300" stroke="#fff" strokeWidth="1.500" />
        </svg>
        展示 1 个消息中的 0 个
      </InfoText>
      <VSep $l={7} />
      <ToggleBtn $w={21}>
        <svg width="14" height="15" viewBox="0 0 14 15" fill="none">
          <circle cx="3.500" cy="3.500" r="2.500" stroke="#d12f20" strokeWidth="1.500" />
          <path d="M6 3h7L9 8v6l-2-1.500V8z" stroke="#444" />
        </svg>
      </ToggleBtn>
      <VSep />
      <Combo $w={150} $h={22} $ml={6}>生成 + IntelliSense<Icon n="caret" s={12} /></Combo>
      <SearchBox $w={196} $h={22} $ml={149}>
        <SearchText>搜索错误列表</SearchText>
        <Icon n="search" s={14} />
        <SearchDrop><Icon n="caret" s={10} /></SearchDrop>
      </SearchBox>
    </ErrTools>
    <GridWrap>
      <GridMain>
        <HeaderRow>
          <HeaderCell />
          <HeaderCell><HeaderMark /></HeaderCell>
          <HeaderCell>说明 <Icon n="caret" s={14} /></HeaderCell>
          <HeaderCell>项目</HeaderCell>
          <HeaderCell>文件</HeaderCell>
          <HeaderCell>行</HeaderCell>
          <HeaderCell />
        </HeaderRow>
        <Rows>
          {errors.map(([t, line]) => (
            <ErrRow key={line}>
              <DotCell><ErrorDot /></DotCell>
              <Cell $pl={4} $size={12.25}>{t}</Cell>
              <Cell>Code601</Cell>
              <Cell $pl={4}>addXXHForm.Designer.cs</Cell>
              <Cell>{line}</Cell>
            </ErrRow>
          ))}
        </Rows>
      </GridMain>
      <Track $w={18} $bg="#eef0f7">
        <ArrowUp />
        <Thumb $w={10} $h={15} $top={88} />
        <ArrowDown />
      </Track>
    </GridWrap>
    <BottomTabs>
      <BottomTab $on $w={58}>错误列表</BottomTab>
      <BottomTab $w={35}>输出</BottomTab>
    </BottomTabs>
  </ErrorPanel>
);

const Explorer = () => (
  <Column $w={316}>
    <PanelHead>
      <PanelTitle>解决方案资源管理器</PanelTitle>
      <HeadIcons />
    </PanelHead>
    <ExplorerBar>
      <ToolSlot $w={28}><Icon n="vsDoc" /></ToolSlot>
      <ToolSlot $w={4}><BarSep /></ToolSlot>
      <ToolSlot $w={28}><Icon n="history" /></ToolSlot>
      <ToolSlot $w={6}><Icon n="caret" s={12} /></ToolSlot>
      <ToolSlot $w={28}><Icon n="syncArrows" /></ToolSlot>
      <ToolSlot $w={16}><Icon n="refresh" /></ToolSlot>
      <ToolSlot $w={25}><Icon n="collapse" /></ToolSlot>
      <Toggled><Icon n="pages" /></Toggled>
      <ToolSlot $w={6}><BarSep /></ToolSlot>
      <ToolSlot $w={24}><Icon n="codeDark" /></ToolSlot>
      <ToolSlot $w={22}><Icon n="wrench" /></ToolSlot>
      <Toggled><Icon n="plugin" /></Toggled>
    </ExplorerBar>
    <SearchRow $h={25}>
      <SearchBox>
        <SearchText>搜索解决方案资源管理器(Ctrl+;)</SearchText>
        <Icon n="search" s={14} />
        <SearchDrop><Icon n="caret" s={10} /></SearchDrop>
      </SearchBox>
    </SearchRow>
    <ListArea>
      <ListBody>
        <TreeRow $level={-1}>
          <TreeSlot $w={14}><Icon n="lock" s={12} /></TreeSlot>
          <TreeSlot $w={16}><Icon n="solution" /></TreeSlot>
          <TreeLabel>解决方案 'Code601' (2 个项目，共 2 个)</TreeLabel>
        </TreeRow>
        {tree.map(([level, arrow, status, icon, text, bold, sel], i) => (
          <TreeRow key={i} $level={level} $bold={bold} $sel={sel}>
            <TreeSlot $w={10}>
              {arrow && <Icon n={arrow === "o" ? "triOpen" : "triClosed"} s={arrow === "o" ? 14 : 12} />}
            </TreeSlot>
            <TreeSlot $w={14}>{status && <Icon n={status} s={status === "lock" ? 11 : 12} />}</TreeSlot>
            <TreeSlot $w={16}><Icon n={icon} s={status === "tick" ? 14 : 16} /></TreeSlot>
            <TreeLabel>{text}</TreeLabel>
          </TreeRow>
        ))}
      </ListBody>
      <Track>
        <ArrowUp />
        <Thumb $h={256} $top={6} />
        <ArrowDown />
      </Track>
    </ListArea>
  </Column>
);

export default function App() {
  return (
    <Root>
      <Global />
      <Strip />
      <Win>
        <MenuBar>
          <Logo width="20" height="20" viewBox="0 0 20 20">
            <path d="M0 6l3-1.500 4 3.500 7-7 6 2.500v13l-6 2.500-7-7-4 3.500L0 14zM3 7.500v5L5.500 10zM14 6l-4 4 4 4z" fill="#7b4fc2" fillRule="evenodd" />
          </Logo>
          {menus.map(([t, k]) => (
            <MenuItem key={k}>
              {t}(<Key>{k}</Key>)
            </MenuItem>
          ))}
          <MenuSep />
          <SearchHint>
            <Icon n="searchThin" s={15} />搜索<Icon n="caret" s={12} />
          </SearchHint>
          <ProjectName>Code601</ProjectName>
          <SignIn>
            <Icon n="signin" s={16} />登录
          </SignIn>
          <WinButtons>
            <WinButton><Icon n="min" /></WinButton>
            <WinButton><Icon n="restore" /></WinButton>
            <WinButton><Icon n="close" /></WinButton>
          </WinButtons>
        </MenuBar>
        <ToolBar>
          {renderTools(toolsA)}
          <Combo $w={64} $ml={3}>Debug<Icon n="caret" s={12} /></Combo>
          <Combo $w={110} $ml={6}>Any CPU<Icon n="caret" s={12} /></Combo>
          <ToolSlot $w={12} $ml={9}><Icon n="play" s={14} /></ToolSlot>
          <RunText>启动</RunText>
          <ToolSlot $w={10}><Icon n="caret" s={12} /></ToolSlot>
          {renderTools(toolsB)}
          <RightTools>
            <Icon n="copilot" />
            <CopilotLabel>GitHub Copilot</CopilotLabel>
            <ToolSlot $w={25}><Icon n="share" /></ToolSlot>
            <ToolSlot $w={25}><Icon n="feedback" /></ToolSlot>
            <AdminButton>管理员</AdminButton>
          </RightTools>
        </ToolBar>
        <Workspace>
          <Toolbox />
          <Column $w={1026}>
            <DocTabs>
              <DocTab $w={144}>addXXHForm.cs</DocTab>
              <DocTab $w={200}>addXXHForm.Designer.cs</DocTab>
              <DocTab $on $w={185} $size={12.3}>
                addXXHForm.cs [设计]
                <TabTail><Icon n="pinDark" s={14} /><Icon n="xDark" s={14} /></TabTail>
              </DocTab>
              <DocTab $w={173} $size={12.25}>addstuForm.cs [设计]</DocTab>
              <TabsEnd>
                <Icon n="caretPale" s={14} />
                <Icon n="gear" s={14} />
              </TabsEnd>
            </DocTabs>
            <DesignPane />
            <ErrorList />
          </Column>
          <Explorer />
        </Workspace>
        <StatusBar>
          <Icon n="bubble" />
          <StatusHint>就绪</StatusHint>
          <StatusRight>
            <StatusItem $gap={7} $ws={3}><Icon n="sort" s={15} />0 / 0</StatusItem>
            <StatusItem $mr={21}><Icon n="caretWhite" s={12} /></StatusItem>
            <StatusItem $gap={7} $mr={22}><Icon n="pencil" s={14} />4</StatusItem>
            <StatusItem $gap={6} $mr={4}><Icon n="branch" />master</StatusItem>
            <StatusItem $mr={26}><Icon n="caretWhite" s={12} /></StatusItem>
            <StatusItem $gap={6} $mr={4}><Icon n="repo" />code601</StatusItem>
            <StatusItem $mr={16}><Icon n="caretWhite" s={12} /></StatusItem>
            <BellWrap><Icon n="bell" /><BellBadge>1</BellBadge></BellWrap>
          </StatusRight>
        </StatusBar>
        <Taskbar>
          <TaskBlock $ml={1243} $w={46} $c="#b5652c" />
          <TaskBlock $ml={95} $w={42} $c="#6e6e6e" />
          <Clock>15:20:02</Clock>
        </Taskbar>
      </Win>
      <RedBox $x={240} $y={108} $w={994} $h={311} />
      <RedBox $x={242} $y={485} $w={1021} $h={315} />
      <RedBox $x={1333} $y={300} $w={239} $h={77} />
    </Root>
  );
}
